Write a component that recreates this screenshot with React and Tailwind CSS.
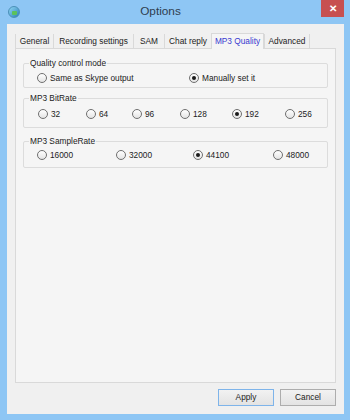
import React, { useState } from 'react';

const font = { fontFamily: '"Liberation Sans", Arial, sans-serif' };

function Radio({ label, checked, onSelect }) {
    return (
        <label className="flex items-center gap-[3px] cursor-default" onClick={onSelect}>
            <span className="w-[10px] h-[10px] rounded-full border border-[#6f6f6f] bg-gradient-to-b from-[#ffffff] to-[#e4e4e4] flex items-center justify-center shrink-0">
                {checked && <span className="w-[4px] h-[4px] rounded-full bg-[#1a1a1a]"></span>}
            </span>
            <span className="text-[8.3px] leading-none text-[#222]">{label}</span>
        </label>
    );
}

function Group({ title, children, className = '' }) {
    return (
        <fieldset className={`border border-[#dcdcdc] rounded-[2px] mx-[7px] ${className}`}>
            <legend className="ml-[5px] text-[8.3px] leading-none text-[#222] px-[1px]">{title}</legend>
            {children}
        </fieldset>
    );
}

export default function App() {
    const [mode, setMode] = useState('manual');
    const [bitrate, setBitrate] = useState('192');
    const [sample, setSample] = useState('44100');

    const tabs = [
        { name: 'General', w: 'w-[38px]' },
        { name: 'Recording settings', w: 'w-[80px]' },
        { name: 'SAM', w: 'w-[31px]' },
        { name: 'Chat reply', w: 'w-[47px]' },
        { name: 'MP3 Quality', w: 'w-[53px]', active: true },
        { name: 'Advanced', w: 'w-[46px]' },
    ];

    const bitrates = [
        { v: '32', w: 'w-[48px]' },
        { v: '64', w: 'w-[46px]' },
        { v: '96', w: 'w-[48px]' },
        { v: '128', w: 'w-[52px]' },
        { v: '192', w: 'w-[53px]' },
        { v: '256', w: 'w-[40px]' },
    ];

    const samples = [
        { v: '16000', w: 'w-[79px]' },
        { v: '32000', w: 'w-[77px]' },
        { v: '44100', w: 'w-[80px]' },
        { v: '48000', w: 'w-[50px]' },
    ];

    return (
        <div className="w-[350px] h-[420px] bg-[#8ec6f4] flex flex-col" style={font}>
            {/* Title bar */}
            <div className="h-[24px] flex items-start relative shrink-0">
                <div className="ml-[8px] mt-[6px] w-[12px] h-[12px] rounded-full bg-gradient-to-br from-[#8fd8f4] to-[#2a7fb8] border border-[#4a90b8] flex items-center justify-center">
                    <span className="w-[5px] h-[4px] bg-[#5cc25a] rounded-[1px] mt-[2px] ml-[1px]"></span>
                </div>
                <div className="flex-1 text-center text-[11.8px] leading-none text-[#2f3d4f] mt-[6px] pr-[20px]">Options</div>
                <div className="mr-[6px] w-[23px] h-[17px] bg-[#c75050] flex items-center justify-center text-white text-[10px] font-bold leading-none">✕</div>
            </div>

            {/* Client area */}
            <div className="flex-1 ml-[7px] mr-[6px] mb-[6px] bg-[#f0f0f0] flex flex-col pt-[9px] px-[8px]">
                {/* Tabs */}
                <div className="flex items-end h-[15px] shrink-0">
                    {tabs.map((t) => (
                        <div
                            key={t.name}
                            className={`${t.w} shrink-0 flex items-center justify-center text-[8.3px] leading-none ${t.active ? 'h-[16px] -mb-px bg-[#f5f5f5] border border-b-0 border-[#d9d9d9] text-[#3a3ad0] relative z-10' : 'h-[14px] border-l border-[#d9d9d9] text-[#222]'} ${t.name === 'Advanced' ? 'border-r' : ''}`}
                        >
                            {t.name}
                        </div>
                    ))}
                </div>

                {/* Tab panel */}
                <div className="h-[335px] bg-[#f5f5f5] border border-[#d9d9d9] pt-[10px] flex flex-col">
                    <Group title="Quality control mode" className="h-[29px]">
                        <div className="flex mt-[6px] ml-[13px]">
                            <div className="w-[152px]">
                                <Radio label="Same as Skype output" checked={mode === 'skype'} onSelect={() => setMode('skype')} />
                            </div>
                            <Radio label="Manually set it" checked={mode === 'manual'} onSelect={() => setMode('manual')} />
                        </div>
                    </Group>

                    <Group title="MP3 BitRate" className="h-[34px] mt-[6px]">
                        <div className="flex mt-[7px] ml-[14px]">
                            {bitrates.map((b) => (
                                <div key={b.v} className={b.w}>
                                    <Radio label={b.v} checked={bitrate === b.v} onSelect={() => setBitrate(b.v)} />
                                </div>
                            ))}
                        </div>
                    </Group>

                    <Group title="MP3 SampleRate" className="h-[31px] mt-[9px]">
                        <div className="flex mt-[5px] ml-[13px]">
                            {samples.map((s) => (
                                <div key={s.v} className={s.w}>
                                    <Radio label={s.v} checked={sample === s.v} onSelect={() => setSample(s.v)} />
                                </div>
                            ))}
                        </div>
                    </Group>
                </div>

                {/* Buttons */}
                <div className="flex justify-end gap-[6px] mt-[6px]">
                    <button className="w-[56px] h-[17px] border border-[#7eb4ea] bg-gradient-to-b from-[#f2f2f2] to-[#e3e3e3] text-[8.3px] leading-none text-[#222]">Apply</button>
                    <button className="w-[56px] h-[17px] border border-[#adadad] bg-gradient-to-b from-[#f2f2f2] to-[#e3e3e3] text-[8.3px] leading-none text-[#222]">Cancel</button>
                </div>
            </div>
        </div>
    );
}
